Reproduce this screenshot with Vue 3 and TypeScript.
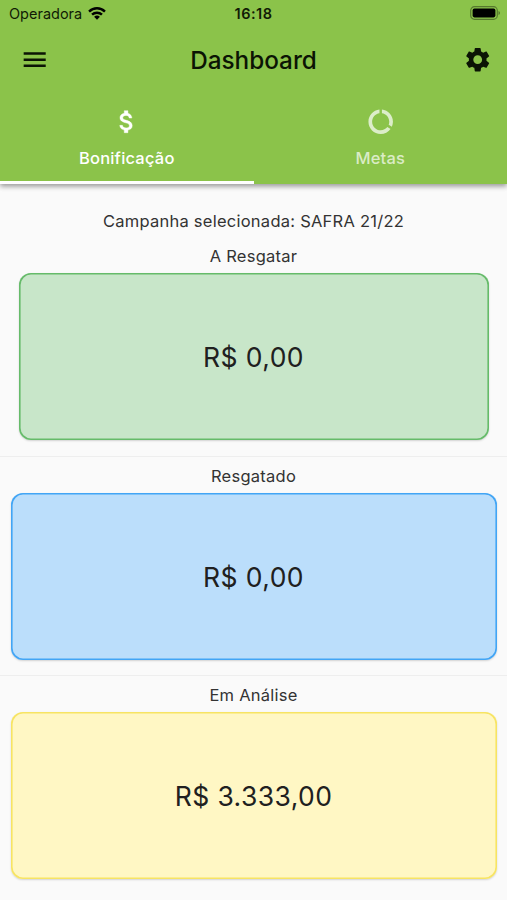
<script setup lang="ts">
interface Panel {
  id: string
  label: string
  value: string
}

const panels: Panel[] = [
  { id: 'green', label: 'A Resgatar', value: 'R$ 0,00' },
  { id: 'blue', label: 'Resgatado', value: 'R$ 0,00' },
  { id: 'yellow', label: 'Em Análise', value: 'R$ 3.333,00' },
]
</script>

<template>
  <div class="screen">
    <header class="header">
      <div class="status">
        <div class="carrier">
          <span class="operator">Operadora</span>
          <svg class="wifi" viewBox="0 0 18 14">
            <path d="M0.2 4.7a12.6 12.6 0 0 1 17.6 0l-1.7 1.8a10.2 10.2 0 0 0-14.2 0z" />
            <path d="M3.2 7.8a8.4 8.4 0 0 1 11.6 0l-1.7 1.8a6 6 0 0 0-8.2 0z" />
            <path d="M6.1 10.8a4.2 4.2 0 0 1 5.8 0L9 13.7z" />
          </svg>
        </div>
        <span class="clock">16:18</span>
        <svg class="battery" viewBox="0 0 30 14">
          <rect x="0.7" y="0.7" width="26.6" height="12.6" rx="3.8" fill="none" stroke="#000" stroke-opacity=".38" stroke-width="1.2" />
          <rect x="2.6" y="2.6" width="22.8" height="8.8" rx="1.8" />
          <path d="M28.5 4.9q1.5.6 1.5 2.1t-1.5 2.1z" fill-opacity=".4" />
        </svg>
      </div>

      <div class="appbar">
        <svg class="icon" viewBox="0 0 24 24">
          <path d="M3 18h18v-2H3v2zm0-5h18v-2H3v2zm0-7v2h18V6H3z" />
        </svg>
        <h1 class="title">Dashboard</h1>
        <svg class="icon" viewBox="0 0 24 24">
          <path d="M19.14 12.94c.04-.3.06-.61.06-.94 0-.32-.02-.64-.07-.94l2.03-1.58c.18-.14.23-.41.12-.61l-1.92-3.32c-.12-.22-.37-.29-.59-.22l-2.39.96c-.5-.38-1.03-.7-1.62-.94l-.36-2.54c-.04-.24-.24-.41-.48-.41h-3.84c-.24 0-.43.17-.47.41l-.36 2.54c-.59.24-1.13.57-1.62.94l-2.39-.96c-.22-.08-.47 0-.59.22L2.74 8.87c-.12.21-.08.47.12.61l2.03 1.58c-.05.3-.09.63-.09.94s.02.64.07.94l-2.03 1.58c-.18.14-.23.41-.12.61l1.92 3.32c.12.22.37.29.59.22l2.39-.96c.5.38 1.03.7 1.62.94l.36 2.54c.05.24.24.41.48.41h3.84c.24 0 .44-.17.47-.41l.36-2.54c.59-.24 1.13-.56 1.62-.94l2.39.96c.22.08.47 0 .59-.22l1.92-3.32c.12-.22.07-.47-.12-.61l-2.01-1.58zM12 15.6c-1.98 0-3.6-1.62-3.6-3.6s1.62-3.6 3.6-3.6 3.6 1.62 3.6 3.6-1.62 3.6-3.6 3.6z" />
        </svg>
      </div>

      <nav class="tabs">
        <div class="tab active">
          <svg class="icon" viewBox="0 0 24 24">
            <path stroke="currentColor" stroke-width=".35" d="M11.8 10.9c-2.27-.59-3-1.2-3-2.15 0-1.09 1.01-1.85 2.7-1.85 1.78 0 2.44.85 2.5 2.1h2.21c-.07-1.72-1.12-3.3-3.21-3.81V3h-3v2.16c-1.94.42-3.5 1.68-3.5 3.61 0 2.31 1.91 3.46 4.7 4.13 2.5.6 3 1.48 3 2.41 0 .69-.49 1.79-2.7 1.79-2.06 0-2.87-.92-2.98-2.1h-2.2c.12 2.19 1.76 3.42 3.68 3.83V21h3v-2.15c1.95-.37 3.5-1.5 3.5-3.55 0-2.84-2.43-3.81-4.7-4.4z" />
          </svg>
          <span class="tab-label">Bonificação</span>
        </div>
        <div class="tab">
          <svg class="icon" viewBox="0 0 24 24">
            <path d="M13 2.05v3.03c3.39.49 6 3.39 6 6.92 0 .9-.18 1.75-.48 2.54l2.6 1.53c.56-1.24.88-2.62.88-4.07 0-5.18-3.95-9.45-9-9.95zM12 19c-3.87 0-7-3.13-7-7 0-3.53 2.61-6.43 6-6.92V2.05c-5.06.5-9 4.76-9 9.95 0 5.52 4.47 10 9.99 10 3.31 0 6.24-1.61 8.06-4.09l-2.6-1.53C16.17 17.98 14.21 19 12 19z" />
          </svg>
          <span class="tab-label">Metas</span>
        </div>
      </nav>
    </header>

    <main class="content">
      <p class="campaign">Campanha selecionada: SAFRA 21/22</p>
      <section v-for="panel in panels" :key="panel.id" class="section" :class="panel.id">
        <h2 class="label">{{ panel.label }}</h2>
        <div class="card">
          <span class="value">{{ panel.value }}</span>
        </div>
      </section>
    </main>
  </div>
</template>

<style>
body {
  margin: 0;
  background: #fafafa;
}
</style>

<style scoped>
.screen {
  box-sizing: border-box;
  width: 507px;
  height: 900px;
  overflow: hidden;
  background: #fafafa;
  font-family: Inter, 'Liberation Sans', sans-serif;
  color: #333;
}

.header {
  position: relative;
  height: 184px;
  background: #8bc34a;
  box-shadow: 0 2px 5px rgba(0, 0, 0, 0.3), 0 3px 5px rgba(0, 0, 0, 0.12);
}

.status {
  display: grid;
  grid-template-columns: 1fr auto 1fr;
  align-items: center;
  height: 26px;
  padding: 0 7px 0 9px;
  color: #111b05;
  font-size: 14.5px;
}

.carrier {
  display: flex;
  align-items: center;
  gap: 6px;
}

.operator {
  padding-top: 1px;
}

.wifi {
  width: 18px;
  height: 14px;
}

.clock {
  margin-right: 2px;
  font-weight: 600;
  letter-spacing: 0.5px;
}

.battery {
  justify-self: end;
  width: 30px;
  height: 14px;
}

.appbar {
  display: flex;
  align-items: center;
  justify-content: space-between;
  height: 67px;
  padding: 0 15px 0 20px;
}

.icon {
  display: block;
  width: 29.4px;
  height: 29.4px;
  fill: currentColor;
}

.appbar .icon {
  color: #0b1404;
}

.title {
  margin: 0 5px 0 0;
  color: #0b1404;
  font-size: 24.3px;
  font-weight: 500;
  line-height: 30px;
}

.tabs {
  display: grid;
  grid-template-columns: 1fr 1fr;
  height: 91px;
}

.tab {
  display: flex;
  flex-direction: column;
  align-items: center;
  box-sizing: border-box;
  padding-top: 14px;
  border-bottom: 3px solid transparent;
  color: rgba(255, 255, 255, 0.7);
}

.tab.active {
  border-bottom-color: #fff;
  color: #fff;
}

.tab-label {
  margin-top: 12px;
  font-size: 16.5px;
  font-weight: 500;
  letter-spacing: 0.2px;
  line-height: 20px;
}

.content {
  display: flex;
  flex-direction: column;
  padding-top: 27px;
}

.campaign {
  margin: 0;
  font-size: 16.5px;
  letter-spacing: 0.25px;
  line-height: 20px;
  text-align: center;
}

.section {
  box-sizing: border-box;
  height: 219.3px;
  padding: 8.5px 10px 0 11px;
  border-top: 1px solid #eeeeee;
}

.section.green {
  height: 225px;
  padding: 14px 18px 0 19px;
  border-top-color: transparent;
}

.label {
  margin: 0 1px 0 0;
  font-size: 16.5px;
  font-weight: 400;
  letter-spacing: 0.25px;
  line-height: 20px;
  text-align: center;
}

.card {
  --edge: #66bb6a;
  display: flex;
  align-items: center;
  justify-content: center;
  box-sizing: border-box;
  height: 167px;
  margin-top: 7px;
  padding: 1px 1px 0 0;
  border-radius: 12px;
  box-shadow: inset 0 0 0 1.6px var(--edge), 0 1px 2px rgba(0, 0, 0, 0.16);
}

.green .card {
  background: #c8e6c9;
}

.blue .card {
  --edge: #42a5f5;
  background: #bbdefb;
}

.yellow .card {
  --edge: #f7e463;
  background: #fff7c4;
}

.value {
  color: #202020;
  font-size: 26.5px;
  letter-spacing: 0.4px;
  line-height: 34px;
}
</style>
